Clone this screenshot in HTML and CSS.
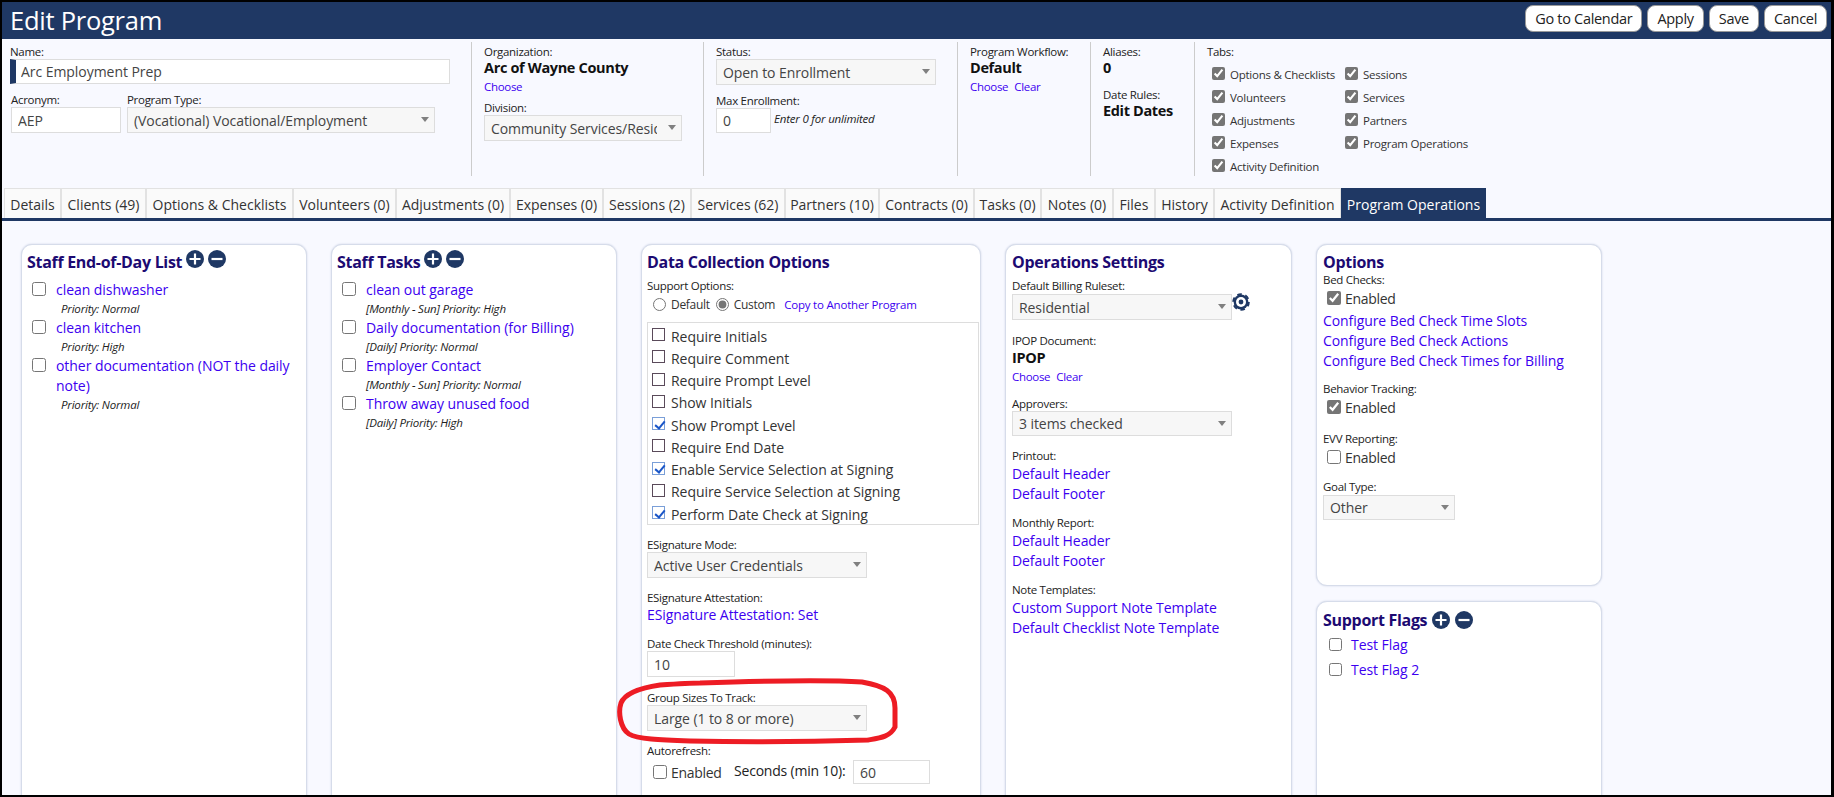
FILE: index.html
```html
<!DOCTYPE html>
<html lang="en">
<head>
    <meta charset="UTF-8">
    <meta name="viewport" content="width=device-width, initial-scale=1.0">
    <title>Edit Program</title>
    <link rel="stylesheet" href="styles.css">
</head>
<body>
<div class="page">
    <!-- Title bar -->
    <div class="title-bar">
        <h1>Edit Program</h1>
        <div class="title-buttons">
            <button>Go to Calendar</button>
            <button>Apply</button>
            <button>Save</button>
            <button>Cancel</button>
        </div>
    </div>

    <!-- Program fields -->
    <div class="top-panel">
        <div class="top-section sec-name">
            <label class="lbl">Name:</label>
            <input class="text name-input" type="text" value="Arc Employment Prep">
            <div class="name-row">
                <div>
                    <label class="lbl acronym-lbl">Acronym:</label>
                    <input class="text acronym-input" type="text" value="AEP">
                </div>
                <div>
                    <label class="lbl">Program Type:</label>
                    <div class="select type-select"><select disabled><option>(Vocational) Vocational/Employment</option></select></div>
                </div>
            </div>
        </div>
        <div class="top-section sec-org">
            <label class="lbl">Organization:</label>
            <div class="big">Arc of Wayne County</div>
            <div class="small-links"><a>Choose</a></div>
            <label class="lbl division-lbl">Division:</label>
            <div class="select division-select"><select disabled><option>Community Services/Residential</option></select></div>
        </div>
        <div class="top-section sec-status">
            <label class="lbl">Status:</label>
            <div class="select status-select"><select disabled><option>Open to Enrollment</option></select></div>
            <label class="lbl max-lbl">Max Enrollment:</label>
            <div class="max-row">
                <input class="text max-input" type="text" value="0">
                <em>Enter 0 for unlimited</em>
            </div>
        </div>
        <div class="top-section sec-flow">
            <label class="lbl">Program Workflow:</label>
            <div class="big">Default</div>
            <div class="small-links"><a>Choose</a><a>Clear</a></div>
        </div>
        <div class="top-section sec-alias">
            <label class="lbl">Aliases:</label>
            <div class="big">0</div>
            <label class="lbl dates-lbl">Date Rules:</label>
            <div class="big">Edit Dates</div>
        </div>
        <div class="top-section sec-tabs">
            <label class="lbl">Tabs:</label>
            <div class="tab-checks">
                <label><input type="checkbox" checked>Options &amp; Checklists</label>
                <label><input type="checkbox" checked>Sessions</label>
                <label><input type="checkbox" checked>Volunteers</label>
                <label><input type="checkbox" checked>Services</label>
                <label><input type="checkbox" checked>Adjustments</label>
                <label><input type="checkbox" checked>Partners</label>
                <label><input type="checkbox" checked>Expenses</label>
                <label><input type="checkbox" checked>Program Operations</label>
                <label><input type="checkbox" checked>Activity Definition</label>
            </div>
        </div>
    </div>

    <!-- Tabs -->
    <div class="tabs">
        <a class="w57">Details</a>
        <a class="w85">Clients (49)</a>
        <a class="w147">Options &amp; Checklists</a>
        <a class="w103">Volunteers (0)</a>
        <a class="w114">Adjustments (0)</a>
        <a class="w93">Expenses (0)</a>
        <a class="w88">Sessions (2)</a>
        <a class="w94">Services (62)</a>
        <a class="w94">Partners (10)</a>
        <a class="w95">Contracts (0)</a>
        <a class="w67">Tasks (0)</a>
        <a class="w72">Notes (0)</a>
        <a class="w42">Files</a>
        <a class="w59">History</a>
        <a class="w127">Activity Definition</a>
        <a class="w145 active">Program Operations</a>
    </div>

    <!-- Cards -->
    <div class="cards">
        <div class="card card-list">
            <h2>Staff End-of-Day List
                <svg class="round-icon" viewBox="0 0 18 18"><circle cx="9" cy="9" r="9"/><path d="M9 3.5v11M3.5 9h11"/></svg>
                <svg class="round-icon" viewBox="0 0 18 18"><circle cx="9" cy="9" r="9"/><path d="M3.5 9h11"/></svg>
            </h2>
            <div class="item">
                <input type="checkbox"><a>clean dishwasher</a>
                <div class="sub indent">Priority: Normal</div>
            </div>
            <div class="item">
                <input type="checkbox"><a>clean kitchen</a>
                <div class="sub indent">Priority: High</div>
            </div>
            <div class="item">
                <input type="checkbox"><a>other documentation (NOT the daily note)</a>
                <div class="sub indent">Priority: Normal</div>
            </div>
        </div>

        <div class="card card-list">
            <h2>Staff Tasks
                <svg class="round-icon" viewBox="0 0 18 18"><circle cx="9" cy="9" r="9"/><path d="M9 3.5v11M3.5 9h11"/></svg>
                <svg class="round-icon" viewBox="0 0 18 18"><circle cx="9" cy="9" r="9"/><path d="M3.5 9h11"/></svg>
            </h2>
            <div class="item">
                <input type="checkbox"><a>clean out garage</a>
                <div class="sub">[Monthly - Sun] Priority: High</div>
            </div>
            <div class="item">
                <input type="checkbox"><a>Daily documentation (for Billing)</a>
                <div class="sub">[Daily] Priority: Normal</div>
            </div>
            <div class="item">
                <input type="checkbox"><a>Employer Contact</a>
                <div class="sub">[Monthly - Sun] Priority: Normal</div>
            </div>
            <div class="item">
                <input type="checkbox"><a>Throw away unused food</a>
                <div class="sub">[Daily] Priority: High</div>
            </div>
        </div>

        <div class="card card-data">
            <h2>Data Collection Options</h2>
            <label class="lbl support-lbl">Support Options:</label>
            <div class="radio-row">
                <input type="radio" name="support"><span>Default</span>
                <input type="radio" name="support" checked><span>Custom</span>
                <a>Copy to Another Program</a>
            </div>
            <div class="check-box">
                <label><input type="checkbox">Require Initials</label>
                <label><input type="checkbox">Require Comment</label>
                <label><input type="checkbox">Require Prompt Level</label>
                <label><input type="checkbox">Show Initials</label>
                <label><input type="checkbox" checked>Show Prompt Level</label>
                <label><input type="checkbox">Require End Date</label>
                <label><input type="checkbox" checked>Enable Service Selection at Signing</label>
                <label><input type="checkbox">Require Service Selection at Signing</label>
                <label><input type="checkbox" checked>Perform Date Check at Signing</label>
            </div>
            <label class="lbl field">ESignature Mode:</label>
            <div class="select wide-select"><select disabled><option>Active User Credentials</option></select></div>
            <label class="lbl field">ESignature Attestation:</label>
            <a class="link-line">ESignature Attestation: Set</a>
            <label class="lbl field-s">Date Check Threshold (minutes):</label>
            <input class="text threshold-input" type="text" value="10">
            <label class="lbl field-g">Group Sizes To Track:</label>
            <div class="select wide-select"><select disabled><option>Large (1 to 8 or more)</option></select></div>
            <label class="lbl field-a">Autorefresh:</label>
            <div class="refresh-row">
                <label><input type="checkbox">Enabled</label>
                <span>Seconds (min 10):</span>
                <input class="text seconds-input" type="text" value="60">
            </div>
        </div>

        <div class="card card-ops">
            <h2>Operations Settings</h2>
            <label class="lbl support-lbl">Default Billing Ruleset:</label>
            <div class="billing-row">
                <div class="select wide-select"><select disabled><option>Residential</option></select></div>
                <svg class="gear" viewBox="0 0 18 18">
                    <circle cx="9" cy="9" r="7.4"/>
                    <circle class="gear-teeth" cx="9" cy="9" r="7.8"/>
                    <circle class="gear-ring" cx="9" cy="9" r="5"/>
                    <circle cx="9" cy="9" r="2.4"/>
                </svg>
            </div>
            <label class="lbl ipop-lbl">IPOP Document:</label>
            <div class="big">IPOP</div>
            <div class="small-links"><a>Choose</a><a>Clear</a></div>
            <label class="lbl field-s">Approvers:</label>
            <div class="select wide-select short"><select disabled><option>3 items checked</option></select></div>
            <label class="lbl field">Printout:</label>
            <a class="link-line first">Default Header</a>
            <a class="link-line">Default Footer</a>
            <label class="lbl field-s">Monthly Report:</label>
            <a class="link-line first">Default Header</a>
            <a class="link-line">Default Footer</a>
            <label class="lbl field-s">Note Templates:</label>
            <a class="link-line first">Custom Support Note Template</a>
            <a class="link-line">Default Checklist Note Template</a>
        </div>

        <div class="side-column">
            <div class="card card-options">
                <h2>Options</h2>
                <label class="lbl bed-lbl">Bed Checks:</label>
                <label class="enable"><input type="checkbox" checked>Enabled</label>
                <div class="bed-links">
                    <a class="link-line">Configure Bed Check Time Slots</a>
                    <a class="link-line">Configure Bed Check Actions</a>
                    <a class="link-line">Configure Bed Check Times for Billing</a>
                </div>
                <label class="lbl behavior-lbl">Behavior Tracking:</label>
                <label class="enable"><input type="checkbox" checked>Enabled</label>
                <label class="lbl field-l">EVV Reporting:</label>
                <label class="enable"><input type="checkbox">Enabled</label>
                <label class="lbl goal-lbl">Goal Type:</label>
                <div class="select goal-select"><select disabled><option>Other</option></select></div>
            </div>
            <div class="card card-flags">
                <h2>Support Flags
                    <svg class="round-icon" viewBox="0 0 18 18"><circle cx="9" cy="9" r="9"/><path d="M9 3.5v11M3.5 9h11"/></svg>
                    <svg class="round-icon" viewBox="0 0 18 18"><circle cx="9" cy="9" r="9"/><path d="M3.5 9h11"/></svg>
                </h2>
                <div class="flag"><input type="checkbox"><a>Test Flag</a></div>
                <div class="flag"><input type="checkbox"><a>Test Flag 2</a></div>
            </div>
        </div>
    </div>

    <!-- Red marker drawn over the screenshot -->
    <svg class="marker" viewBox="0 0 1834 797" width="1834" height="797">
        <path d="M700 683 C760 681 830 680 862 682 C885 686 895 692 895 708 L895 727 C890 737 880 738 868 740 C800 742 740 742 690 741 C660 740 637 739 629 734 C620 728 618 712 621 703 C625 693 640 688 660 685 C675 684 690 683 700 683 Z"/>
    </svg>
</div>
</body>
</html>
```

FILE: styles.css
```css
/* General Styling */
* {
    box-sizing: border-box;
}
html, body {
    margin: 0;
    height: 797px;
    overflow: hidden;
    background-color: #f8f9ff;
}
body {
    font-family: "Open Sans", "Noto Sans", sans-serif;
    font-size: 14px;
    color: #333;
}
a {
    color: #3c00f0;
    cursor: pointer;
}
.page {
    position: relative;
    height: 797px;
    border: solid black;
    border-width: 2px 3px 2px 2px;
    overflow: hidden;
}
.lbl {
    display: block;
    font-size: 11.5px;
    line-height: 14px;
    letter-spacing: -0.3px;
    color: #222;
}
.big {
    font-size: 14.5px;
    font-weight: 700;
    line-height: 18px;
    letter-spacing: -0.35px;
    color: #111;
}
.small-links {
    font-size: 11.5px;
    line-height: 16px;
    letter-spacing: -0.3px;
    margin-top: 2px;
}
.small-links a {
    margin-right: 6px;
}
.text {
    display: block;
    height: 26px;
    padding: 0 6px;
    border: 1px solid #ddd;
    background-color: white;
    font: inherit;
    letter-spacing: -0.05px;
    color: #444;
}

/* Custom select box with its small arrow */
.select {
    position: relative;
    height: 26px;
}
.select select {
    appearance: none;
    display: block;
    width: 100%;
    height: 100%;
    padding: 0 24px 0 6px;
    border: 1px solid #ddd;
    border-radius: 0;
    background-color: #f7f7f7;
    font: inherit;
    letter-spacing: -0.08px;
    color: #444;
    opacity: 1;
}
.select::after {
    content: "";
    position: absolute;
    right: 6px;
    top: 10px;
    border: 4px solid transparent;
    border-top: 5px solid #808080;
    border-bottom: 0;
}

/* Title bar */
.title-bar {
    display: flex;
    justify-content: space-between;
    height: 37px;
    padding: 3px 4px 0 8px;
    background-color: #1f3864;
}
.title-bar h1 {
    margin: 0;
    font-size: 25.5px;
    font-weight: 400;
    line-height: 30px;
    letter-spacing: -0.25px;
    color: white;
}
.title-buttons {
    display: flex;
    gap: 5px;
}
.title-buttons button {
    height: 27px;
    padding: 0 9px;
    border: 1px solid #999;
    border-radius: 8px;
    background-color: white;
    font: inherit;
    font-size: 14.5px;
    letter-spacing: -0.3px;
    color: #222;
}

/* Program fields */
.top-panel {
    display: flex;
    height: 149px;
    padding-top: 3px;
}
.top-section {
    height: 134px;
    padding: 3px 0 0 12px;
    border-right: 1px solid #ccc;
}
.sec-name {
    width: 470px;
    padding-left: 8px;
}
.sec-org {
    width: 232px;
}
.sec-status {
    width: 254px;
}
.sec-flow {
    width: 133px;
}
.sec-alias {
    width: 104px;
}
.sec-tabs {
    border-right: none;
}
.name-input {
    width: 440px;
    height: 25px;
    padding-left: 5px;
    border-left: 6px solid #1f3864;
}
.name-row {
    display: flex;
    gap: 6px;
    margin-top: 9px;
}
.acronym-lbl {
    margin-left: 1px;
}
.acronym-input {
    width: 110px;
    margin-left: 1px;
}
.type-select {
    width: 308px;
}
.division-lbl {
    margin-top: 6px;
}
.division-select {
    width: 198px;
}
.status-select {
    width: 220px;
}
.max-lbl {
    margin-top: 9px;
}
.max-row {
    display: flex;
    align-items: center;
    gap: 3px;
}
.max-row em {
    font-size: 11.5px;
    letter-spacing: -0.2px;
    color: #222;
    margin-top: -4px;
}
.max-input {
    width: 55px;
    height: 25px;
}
.dates-lbl {
    margin-top: 11px;
}
.tab-checks {
    display: grid;
    grid-template-columns: 133px auto;
    grid-auto-rows: 23px;
    margin: 4px 0 0 5px;
}
.tab-checks label {
    display: flex;
    align-items: center;
    font-size: 11.5px;
    letter-spacing: -0.25px;
    white-space: nowrap;
}
.tab-checks input {
    width: 13px;
    height: 13px;
    margin: 0 5px 3px 0;
    accent-color: #757575;
}

/* Tabs */
.tabs {
    display: flex;
    height: 33px;
    padding-left: 2px;
    border-bottom: 3px solid #1f3864;
}
.tabs a {
    display: block;
    padding-top: 6px;
    border: 1px solid #e2e2e2;
    border-bottom: none;
    background-color: #fafafa;
    text-align: center;
    line-height: 20px;
    letter-spacing: 0;
    white-space: nowrap;
    color: #333;
}
.tabs a.active {
    background-color: #1f3864;
    border-color: #1f3864;
    color: white;
}
.w42 { width: 42px; }
.w57 { width: 57px; }
.w59 { width: 59px; }
.w67 { width: 67px; }
.w72 { width: 72px; }
.w85 { width: 85px; }
.w88 { width: 88px; }
.w93 { width: 93px; }
.w94 { width: 94px; }
.w95 { width: 95px; }
.w103 { width: 103px; }
.w114 { width: 114px; }
.w127 { width: 127px; }
.w145 { width: 145px; }
.w147 { width: 147px; }

/* Cards */
.cards {
    display: flex;
    align-items: flex-start;
    gap: 24px;
    padding: 23px 0 0 19px;
}
.card {
    flex: none;
    height: 700px;
    padding: 8px 6px 0 6px;
    border: 1px solid #d6dcea;
    border-radius: 11px;
    background-color: white;
    box-shadow: 0 0 2px #c9d0e2;
}
.card h2 {
    display: flex;
    align-items: center;
    gap: 4px;
    margin: 0;
    height: 18px;
    font-size: 16px;
    font-weight: 700;
    letter-spacing: -0.3px;
    color: #1c0a72;
    white-space: nowrap;
}
.round-icon {
    width: 18px;
    height: 18px;
    margin-top: -6px;
}
.round-icon circle {
    fill: #1f3864;
}
.round-icon path {
    fill: none;
    stroke: white;
    stroke-width: 2.2;
}
.card-list {
    width: 286px;
    padding-left: 5px;
}
.item {
    position: relative;
    padding-left: 29px;
    line-height: 20px;
    letter-spacing: -0.05px;
}
.card-list h2 + .item {
    margin-top: 9px;
}
.item input {
    position: absolute;
    left: 5px;
    top: 2px;
    width: 14px;
    height: 14px;
    margin: 0;
}
.sub {
    font-size: 11.5px;
    font-style: italic;
    line-height: 18px;
    letter-spacing: -0.2px;
    color: #222;
}
.sub.indent {
    padding-left: 5px;
}
.link-line {
    display: block;
    line-height: 20px;
    letter-spacing: -0.08px;
    white-space: nowrap;
}
.link-line.first {
    margin-top: 1px;
}
.field {
    margin-top: 13px;
}
.field-s {
    margin-top: 12px;
}
.field-l {
    margin-top: 15px;
}
.field-g {
    margin-top: 14px;
}
.field-a {
    margin-top: 13px;
}

/* Data collection card */
.card-data {
    width: 340px;
    padding-left: 5px;
}
.support-lbl {
    margin-top: 8px;
}
.radio-row {
    display: flex;
    align-items: center;
    height: 18px;
    margin: 2px 0 9px 6px;
    font-size: 12px;
    letter-spacing: -0.3px;
}
.radio-row input {
    width: 13px;
    height: 13px;
    margin: 0 5px 0 0;
    accent-color: #757575;
}
.radio-row span {
    margin-right: 6px;
}
.radio-row a {
    margin-left: 3px;
    font-size: 11.5px;
    letter-spacing: -0.2px;
}
.check-box {
    width: 332px;
    height: 203px;
    padding: 2px 0 0 4px;
    border: 1px solid #ddd;
    overflow: hidden;
}
.check-box label {
    display: flex;
    align-items: center;
    height: 22.25px;
    letter-spacing: -0.05px;
    white-space: nowrap;
}
.check-box input {
    appearance: none;
    flex: none;
    position: relative;
    width: 13px;
    height: 13px;
    margin: -3px 6px 0 0;
    border: 1px solid #5a4a5a;
    background-color: white;
}
.check-box input:checked {
    border-color: #7a9fd8;
}
.check-box input:checked::after {
    content: "";
    position: absolute;
    left: 3.5px;
    top: 0.5px;
    width: 4px;
    height: 8px;
    border: solid #1a56c8;
    border-width: 0 2px 2px 0;
    transform: rotate(40deg);
}
.wide-select {
    width: 220px;
}
.wide-select.short {
    height: 25px;
}
.threshold-input {
    width: 88px;
}
.refresh-row {
    display: flex;
    align-items: center;
    height: 24px;
    margin-top: 2px;
}
.refresh-row label {
    display: flex;
    align-items: center;
    width: 81px;
    margin-left: 6px;
    letter-spacing: -0.3px;
}
.refresh-row input[type=checkbox] {
    width: 14px;
    height: 14px;
    margin: 0 4px 0 0;
}
.refresh-row span {
    width: 119px;
    letter-spacing: -0.2px;
    color: #222;
    margin-top: -3px;
}
.seconds-input {
    width: 77px;
    height: 24px;
}

/* Operations card */
.card-ops {
    width: 287px;
}
.billing-row {
    display: flex;
    margin-top: 1px;
}
.gear {
    width: 18px;
    height: 18px;
    margin-top: -1px;
}
.gear circle {
    fill: #1f3864;
}
.gear .gear-teeth {
    fill: none;
    stroke: #1f3864;
    stroke-width: 2;
    stroke-dasharray: 4.5 3.7;
}
.gear .gear-ring {
    fill: white;
}
.ipop-lbl {
    margin-top: 14px;
}
.card-ops .big {
    margin-top: 1px;
}

/* Options column */
.side-column {
    display: flex;
    flex-direction: column;
    gap: 15px;
    width: 286px;
}
.card-options {
    height: 342px;
}
.bed-lbl {
    margin-top: 2px;
}
.enable {
    display: flex;
    align-items: center;
    height: 20px;
    margin-top: 1px;
    padding-left: 4px;
    letter-spacing: -0.3px;
}
.enable input {
    width: 14px;
    height: 14px;
    margin: 0 4px 0 0;
    accent-color: #757575;
}
.bed-links {
    margin-top: 3px;
}
.behavior-lbl {
    margin-top: 11px;
}
.goal-lbl {
    margin-top: 13px;
}
.goal-select {
    width: 132px;
    height: 25px;
    margin-top: 1px;
}
.card-flags {
    padding-top: 9px;
}
.card-flags h2 {
    gap: 5px;
    margin-bottom: 5px;
}
.card-flags .round-icon {
    margin-top: 0;
}
.flag {
    display: flex;
    align-items: center;
    height: 20px;
    margin-bottom: 5px;
    padding-left: 6px;
    letter-spacing: -0.05px;
}
.flag input {
    width: 13px;
    height: 13px;
    margin: 0 9px 0 0;
}

/* Red marker */
.marker {
    position: absolute;
    left: -2px;
    top: -2px;
    pointer-events: none;
}
.marker path {
    fill: none;
    stroke: #ed1c24;
    stroke-width: 5;
}
```
